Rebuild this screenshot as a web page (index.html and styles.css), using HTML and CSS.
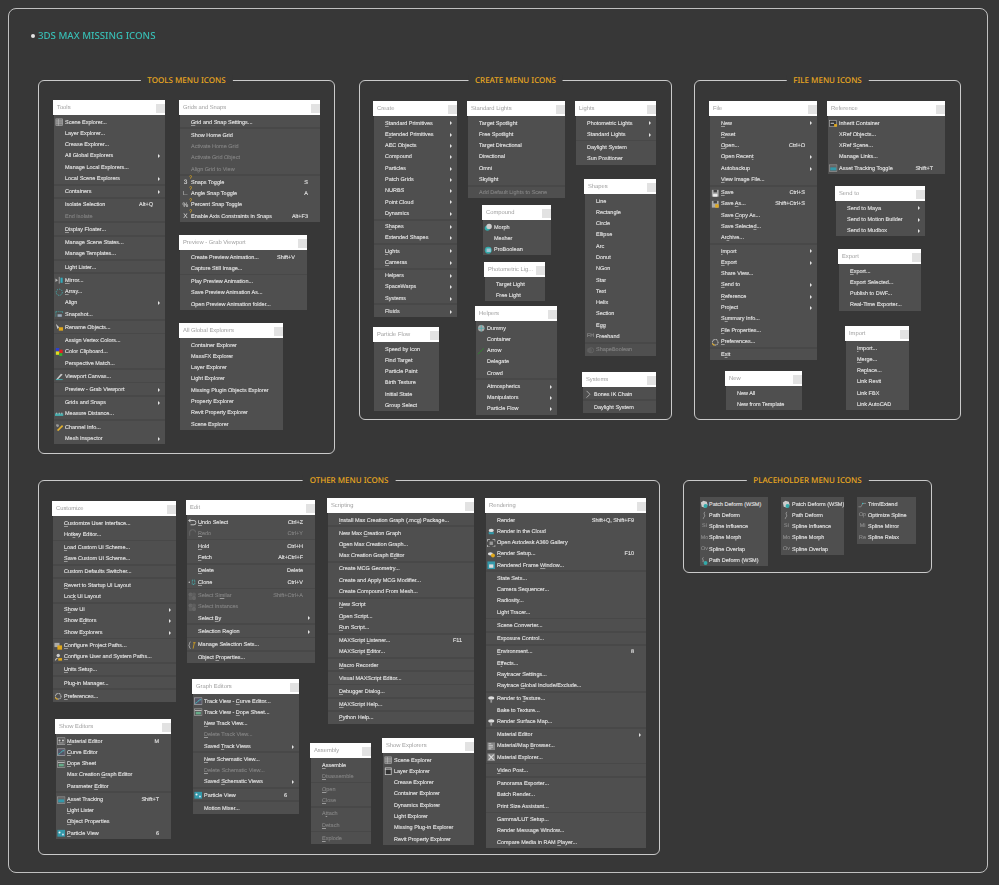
FILE: index.html
```html
<!DOCTYPE html>
<html lang="en">
<head>
<meta charset="utf-8">
<title>3DS Max Missing Icons</title>
<link rel="stylesheet" href="styles.css">
</head>
<body>
<svg class="sprite" aria-hidden="true">
  <symbol id="table" viewBox="0 0 10 10"><rect x="1" y="1" width="8" height="8" fill="#777" stroke="#aaa" stroke-width=".7"/><path d="M1 3.5h8M1 6h8M4 1v8" stroke="#ccc" stroke-width=".6"/></symbol>
  <symbol id="layer" viewBox="0 0 10 10"><rect x="1.5" y="1" width="7" height="8" fill="#333" stroke="#ccc" stroke-width=".9"/><path d="M1 2.6h8" stroke="#ccc"/></symbol>
  <symbol id="mirror" viewBox="0 0 10 10"><path d="M.5 3l3 2-3 2z" fill="#bbb"/><path d="M5 1v8" stroke="#ddd" stroke-width=".7"/><rect x="6.5" y="2" width="2.5" height="6" fill="#3ab"/></symbol>
  <symbol id="array" viewBox="0 0 10 10"><circle cx="5" cy="5" r="3.6" fill="none" stroke="#4bb" stroke-width="1" stroke-dasharray="1.5 1.2"/></symbol>
  <symbol id="snapshot" viewBox="0 0 10 10"><path d="M1 2h8M1 2v6M9 2v2" stroke="#4bb" stroke-dasharray="1.2 1" fill="none" stroke-width=".9"/><rect x="3" y="5" width="5" height="3" fill="#9ab"/></symbol>
  <symbol id="rename" viewBox="0 0 10 10"><path d="M1 1l4 4-2 2z" fill="#ccc"/><rect x="4.5" y="5" width="5" height="4" fill="#e0a81c"/></symbol>
  <symbol id="color" viewBox="0 0 10 10"><rect x="1" y="0" width="4" height="4" fill="#2b3fd0"/><rect x="5" y="2" width="4" height="4" fill="#d22"/><rect x="1" y="4" width="4" height="4" fill="#dd2"/><rect x="5" y="6" width="3.500" height="3.500" fill="#3a3"/></symbol>
  <symbol id="canvas" viewBox="0 0 10 10"><path d="M1 9l6-7 2 1-6 6z" fill="#ccc"/><path d="M1 9h8" stroke="#4bb"/></symbol>
  <symbol id="measure" viewBox="0 0 10 10"><rect x="0" y="4" width="10" height="3" fill="#4aa"/><path d="M2 3v2M5 3v2M8 3v2" stroke="#ddd" stroke-width=".8"/></symbol>
  <symbol id="channel" viewBox="0 0 10 10"><path d="M1 1l3 3-1 1z" fill="#aaa"/><path d="M3 9l6-6" stroke="#e0b030" stroke-width="2"/><circle cx="3" cy="3" r="1.600" fill="#999"/></symbol>
  <symbol id="save" viewBox="0 0 10 10"><rect x="1" y="1" width="8" height="8" fill="#aaa"/><rect x="3" y="1" width="4" height="3" fill="#444"/><rect x="2.500" y="6" width="5" height="3" fill="#eee"/></symbol>
  <symbol id="saveas" viewBox="0 0 10 10"><rect x="1" y="1" width="8" height="8" fill="#aaa"/><rect x="3" y="1" width="4" height="3" fill="#444"/><rect x="5" y="5" width="4" height="4" fill="#e0a81c"/></symbol>
  <symbol id="gear" viewBox="0 0 10 10"><circle cx="5" cy="5" r="3.300" fill="none" stroke="#bbb" stroke-width="1.300" stroke-dasharray="1.400 .6"/><path d="M1.500 6.500a3.800 3.800 0 0 0 3 2" stroke="#e0a81c" fill="none" stroke-width="1.200"/></symbol>
  <symbol id="inherit" viewBox="0 0 10 10"><rect x=".5" y="1.500" width="8" height="7" fill="#333" stroke="#bbb" stroke-width=".7"/><path d="M2 5h4" stroke="#eee"/><rect x="6" y="6" width="3.500" height="3" fill="#e0a81c"/></symbol>
  <symbol id="asset" viewBox="0 0 10 10"><rect x=".5" y="1" width="9" height="8" fill="#666" stroke="#aaa" stroke-width=".6"/><rect x="1.500" y="4" width="7" height="3.500" fill="#39a"/></symbol>
  <symbol id="morph" viewBox="0 0 10 10"><circle cx="4" cy="6" r="3.200" fill="#3aa"/><circle cx="6" cy="4" r="3.200" fill="#ccc"/></symbol>
  <symbol id="pro" viewBox="0 0 10 10"><circle cx="5" cy="5" r="4" fill="#3aa"/><path d="M3 3h5v4H3z" fill="#bcd" opacity=".8"/></symbol>
  <symbol id="dummy" viewBox="0 0 10 10"><circle cx="5" cy="5" r="3.800" fill="#aaa"/><path d="M1 5h8M5 1v8" stroke="#4aa" stroke-width=".8"/></symbol>
  <symbol id="green" viewBox="0 0 10 10"><path d="M1 8.500l7-7" stroke="#2c8a2c" stroke-width="1"/></symbol>
  <symbol id="bones" viewBox="0 0 10 10"><path d="M3 1l4 4-4 4" fill="none" stroke="#bbb" stroke-width="1"/></symbol>
  <symbol id="dimcircle" viewBox="0 0 10 10"><circle cx="4" cy="5" r="3" fill="#5c5c5c"/><circle cx="6" cy="5" r="3" fill="none" stroke="#666"/></symbol>
  <symbol id="undo" viewBox="0 0 10 10"><path d="M1 3h6a2 2 0 0 1 0 5H3M1 3l2-2M1 3l2 2" fill="none" stroke="#eee" stroke-width=".9"/></symbol>
  <symbol id="redo" viewBox="0 0 10 10"><path d="M9 4a3.500 3.500 0 0 0-7 1v3" fill="none" stroke="#666" stroke-width="1.200"/></symbol>
  <symbol id="clone" viewBox="0 0 10 10"><circle cx="1.500" cy="5" r=".8" fill="#ccc"/><path d="M5 2.500h3v5H5z" fill="none" stroke="#4cc" stroke-width=".9" stroke-dasharray="1.200 1"/></symbol>
  <symbol id="similar" viewBox="0 0 10 10"><circle cx="3" cy="3" r="2.500" fill="#666"/><circle cx="7" cy="3" r="2.500" fill="#5e5e5e"/><circle cx="3" cy="7" r="2.500" fill="#5e5e5e"/><circle cx="7" cy="7" r="2.500" fill="#666"/></symbol>
  <symbol id="sets" viewBox="0 0 10 10"><path d="M3 1C1.500 1 2 4.500 1 5c1 .5.5 4 2 4" fill="none" stroke="#ccc" stroke-width=".8"/><path d="M6 2h3M7.500 2L6 9" stroke="#e0a81c" stroke-width=".9"/></symbol>
  <symbol id="curve" viewBox="0 0 10 10"><rect x=".5" y="1" width="9" height="8" fill="#556" stroke="#ccc" stroke-width=".6"/><path d="M1.500 7.500C4 7 5 3 8.500 3" stroke="#4cc" fill="none"/></symbol>
  <symbol id="dope" viewBox="0 0 10 10"><rect x=".5" y="1" width="9" height="8" fill="#555" stroke="#bbb" stroke-width=".6"/><path d="M1 3h8" stroke="#ccc"/><rect x="2" y="4.500" width="6" height="3" fill="#6a8"/></symbol>
  <symbol id="particle" viewBox="0 0 10 10"><rect x=".5" y="1" width="9" height="8" fill="#39a"/><circle cx="3" cy="4" r="1.200" fill="#eee"/><circle cx="7" cy="6.500" r="1.200" fill="#cde"/></symbol>
  <symbol id="material" viewBox="0 0 10 10"><rect x=".5" y="1" width="9" height="8" fill="#555" stroke="#ccc" stroke-width=".6"/><circle cx="3" cy="4" r="1.200" fill="#ccc"/><circle cx="7" cy="4" r="1.200" fill="#ccc"/><path d="M2 7h6" stroke="#bbb"/></symbol>
  <symbol id="paths" viewBox="0 0 10 10"><rect x=".5" y="1" width="6" height="5" fill="#aaa"/><rect x="4" y="4" width="5.500" height="5" fill="#e0a81c"/></symbol>
  <symbol id="user" viewBox="0 0 10 10"><circle cx="5" cy="3" r="2" fill="#ccc"/><path d="M1 9.500c0-3 2-4 4-4" fill="#ccc"/><rect x="5" y="6" width="4.500" height="3" fill="#e0a81c"/></symbol>
  <symbol id="teapot" viewBox="0 0 10 10"><ellipse cx="5" cy="4" rx="3" ry="2" fill="#ddd"/><rect x="2" y="6" width="6" height="2.500" fill="#39a"/></symbol>
  <symbol id="a360" viewBox="0 0 10 10"><path d="M.5 3V.5h3M6.500.5h3v2.500M9.500 7v2.500h-3M3.500 9.500h-3V7" fill="none" stroke="#ccc" stroke-width=".9"/><rect x="3" y="3" width="4" height="4" fill="#999"/></symbol>
  <symbol id="setup" viewBox="0 0 10 10"><ellipse cx="4" cy="4.500" rx="3" ry="2" fill="#ddd"/><circle cx="7" cy="6.500" r="2.300" fill="#e0a81c"/></symbol>
  <symbol id="frame" viewBox="0 0 10 10"><rect x=".5" y=".5" width="9" height="9" fill="#39a"/><rect x="2.500" y="4" width="5" height="4" fill="#ddd"/></symbol>
  <symbol id="tex" viewBox="0 0 10 10"><ellipse cx="5" cy="3.500" rx="3.500" ry="2" fill="#ddd"/><rect x="4" y="5" width="2" height="4" fill="#999"/></symbol>
  <symbol id="browser" viewBox="0 0 10 10"><rect x=".5" y=".5" width="9" height="9" fill="#888"/><path d="M2 2h3M2 4h5M2 6h5M2 8h3" stroke="#ddd" stroke-width=".8"/></symbol>
  <symbol id="explorer" viewBox="0 0 10 10"><rect x=".5" y=".5" width="9" height="9" fill="#888"/><path d="M2 2l6 6M8 2L2 8" stroke="#ddd" stroke-width="1.300"/></symbol>
  <symbol id="patch" viewBox="0 0 10 10"><path d="M1 3l3-2 4 1 1 4-3 3-4-1z" fill="#ccc"/><circle cx="6.500" cy="7" r="2.300" fill="#3aa"/></symbol>
  <symbol id="path" viewBox="0 0 10 10"><path d="M6 1C3 3 7 5 5 7S4 9 4.500 9" fill="none" stroke="#bbb" stroke-width=".8"/></symbol>
  <symbol id="pathw" viewBox="0 0 10 10"><path d="M4 .5C1.500 2 5 4 3.500 6" fill="none" stroke="#bbb" stroke-width=".8"/><circle cx="6.500" cy="7" r="2.300" fill="#3aa"/></symbol>
  <symbol id="trim" viewBox="0 0 10 10"><path d="M.5 8h3l2-4h4" fill="none" stroke="#999" stroke-width=".8"/><circle cx="5.500" cy="4" r=".9" fill="#4bb"/></symbol>
</svg>
<main class="frame">
  <h1 class="page-title">3DS MAX MISSING ICONS</h1>

  <div class="panel-row first">
    <section class="panel p-tools">
      <h2 class="panel-title">TOOLS MENU ICONS</h2>

      <div class="menu m-tools">
        <div class="head"><span>Tools</span><i class="close"></i></div>
        <div class="body">
          <div class="row"><i class="gut"><svg class="ic"><use href="#table"/></svg></i><span class="lab">Scene Explorer...</span></div>
          <div class="row"><span class="lab">Layer Explorer...</span></div>
          <div class="row"><span class="lab">Crease Explorer...</span></div>
          <div class="row"><span class="lab">All Global Explorers</span><i class="arr"></i></div>
          <div class="row"><span class="lab">Manage Local Explorers...</span></div>
          <div class="row"><span class="lab">Local Scene Explorers</span><i class="arr"></i></div>
          <div class="sep"></div>
          <div class="row"><span class="lab">Containers</span><i class="arr"></i></div>
          <div class="sep"></div>
          <div class="row"><span class="lab">Isolate Selection</span><span class="key">Alt+Q</span></div>
          <div class="row dis"><span class="lab">End Isolate</span></div>
          <div class="sep"></div>
          <div class="row"><span class="lab"><u>D</u>isplay Floater...</span></div>
          <div class="sep"></div>
          <div class="row"><span class="lab">Manage Scene States...</span></div>
          <div class="row"><span class="lab">Manage Templates...</span></div>
          <div class="sep"></div>
          <div class="row"><span class="lab">Light Lister...</span></div>
          <div class="sep"></div>
          <div class="row"><i class="gut"><svg class="ic"><use href="#mirror"/></svg></i><span class="lab"><u>M</u>irror...</span></div>
          <div class="row"><i class="gut"><svg class="ic"><use href="#array"/></svg></i><span class="lab"><u>A</u>rray...</span></div>
          <div class="row"><span class="lab">Align</span><i class="arr"></i></div>
          <div class="row"><i class="gut"><svg class="ic"><use href="#snapshot"/></svg></i><span class="lab">Snapshot...</span></div>
          <div class="sep"></div>
          <div class="row"><i class="gut"><svg class="ic"><use href="#rename"/></svg></i><span class="lab">Rename Objects...</span></div>
          <div class="sep"></div>
          <div class="row"><span class="lab">Assign Vertex Colors...</span></div>
          <div class="row"><i class="gut"><svg class="ic"><use href="#color"/></svg></i><span class="lab">Color Clipboard...</span></div>
          <div class="row"><span class="lab">Perspective Match...</span></div>
          <div class="sep"></div>
          <div class="row"><i class="gut"><svg class="ic"><use href="#canvas"/></svg></i><span class="lab">Viewport Canvas...</span></div>
          <div class="sep"></div>
          <div class="row"><span class="lab">Preview - Grab Viewport</span><i class="arr"></i></div>
          <div class="sep"></div>
          <div class="row"><span class="lab">Grids and Snaps</span><i class="arr"></i></div>
          <div class="row"><i class="gut"><svg class="ic"><use href="#measure"/></svg></i><span class="lab">Measure Distance...</span></div>
          <div class="sep"></div>
          <div class="row"><i class="gut"><svg class="ic"><use href="#channel"/></svg></i><span class="lab">Channel Info...</span></div>
          <div class="row"><span class="lab">Mesh Inspector</span><i class="arr"></i></div>
        </div>
      </div>

      <div class="menu m-grids">
        <div class="head"><span>Grids and Snaps</span><i class="close"></i></div>
        <div class="body">
          <div class="row"><span class="lab"><u>G</u>rid and Snap Settings...</span></div>
          <div class="sep"></div>
          <div class="row"><span class="lab">Show Home Grid</span></div>
          <div class="row dis"><span class="lab">Activate Home Grid</span></div>
          <div class="row dis"><span class="lab">Activate Grid Object</span></div>
          <div class="row dis"><span class="lab">Align Grid to View</span></div>
          <div class="sep"></div>
          <div class="row"><i class="gut glyph snap">3</i><span class="lab">Snaps Toggle</span><span class="key">S</span></div>
          <div class="row"><i class="gut glyph snap">∟</i><span class="lab">Angle Snap Toggle</span><span class="key">A</span></div>
          <div class="row"><i class="gut glyph snap">%</i><span class="lab">Percent Snap Toggle</span></div>
          <div class="row"><i class="gut glyph snap">X</i><span class="lab">Enable Axis Constraints in Snaps</span><span class="key">Alt+F3</span></div>
        </div>
      </div>

      <div class="menu m-preview">
        <div class="head"><span>Preview - Grab Viewport</span><i class="close"></i></div>
        <div class="body">
          <div class="row"><span class="lab">Create Preview Animation...</span><span class="key">Shift+V</span></div>
          <div class="row"><span class="lab">Capture Still Image...</span></div>
          <div class="sep"></div>
          <div class="row"><span class="lab">Play Preview Animation...</span></div>
          <div class="row"><span class="lab">Save Preview Animation As...</span></div>
          <div class="row"><span class="lab">Open Preview Animation folder...</span></div>
        </div>
      </div>

      <div class="menu m-global">
        <div class="head"><span>All Global Explorers</span><i class="close"></i></div>
        <div class="body">
          <div class="row"><span class="lab">Container Explorer</span></div>
          <div class="row"><span class="lab">MassFX Explorer</span></div>
          <div class="row"><span class="lab">Layer Explorer</span></div>
          <div class="row"><span class="lab">Light Explorer</span></div>
          <div class="row"><span class="lab">Missing Plugin Objects Explorer</span></div>
          <div class="row"><span class="lab">Property Explorer</span></div>
          <div class="row"><span class="lab">Revit Property Explorer</span></div>
          <div class="row"><span class="lab">Scene Explorer</span></div>
        </div>
      </div>
    </section>

    <section class="panel p-create">
      <h2 class="panel-title">CREATE MENU ICONS</h2>

      <div class="menu m-create">
        <div class="head"><span>Create</span><i class="close"></i></div>
        <div class="body">
          <div class="row"><span class="lab"><u>S</u>tandard Primitives</span><i class="arr"></i></div>
          <div class="row"><span class="lab">E<u>x</u>tended Primitives</span><i class="arr"></i></div>
          <div class="row"><span class="lab">AEC Objects</span><i class="arr"></i></div>
          <div class="row"><span class="lab">Compound</span><i class="arr"></i></div>
          <div class="row"><span class="lab">Particles</span><i class="arr"></i></div>
          <div class="row"><span class="lab">Patch Grids</span><i class="arr"></i></div>
          <div class="row"><span class="lab">NURBS</span><i class="arr"></i></div>
          <div class="row"><span class="lab">Point Cloud</span><i class="arr"></i></div>
          <div class="row"><span class="lab">Dynamics</span><i class="arr"></i></div>
          <div class="sep"></div>
          <div class="row"><span class="lab">S<u>h</u>apes</span><i class="arr"></i></div>
          <div class="row"><span class="lab">Extended Shapes</span><i class="arr"></i></div>
          <div class="sep"></div>
          <div class="row"><span class="lab"><u>L</u>ights</span><i class="arr"></i></div>
          <div class="row"><span class="lab"><u>C</u>ameras</span><i class="arr"></i></div>
          <div class="sep"></div>
          <div class="row"><span class="lab">Helpers</span><i class="arr"></i></div>
          <div class="row"><span class="lab">SpaceWarps</span><i class="arr"></i></div>
          <div class="row"><span class="lab">Systems</span><i class="arr"></i></div>
          <div class="sep"></div>
          <div class="row"><span class="lab">Fluids</span><i class="arr"></i></div>
        </div>
      </div>

      <div class="menu m-stdlights">
        <div class="head"><span>Standard Lights</span><i class="close"></i></div>
        <div class="body">
          <div class="row"><span class="lab">Target Spotlight</span></div>
          <div class="row"><span class="lab">Free Spotlight</span></div>
          <div class="row"><span class="lab">Target Directional</span></div>
          <div class="row"><span class="lab">Directional</span></div>
          <div class="row"><span class="lab">Omni</span></div>
          <div class="row"><span class="lab">Skylight</span></div>
          <div class="sep"></div>
          <div class="row dis"><span class="lab">Add Default Lights to Scene</span></div>
        </div>
      </div>

      <div class="menu m-lights">
        <div class="head"><span>Lights</span><i class="close"></i></div>
        <div class="body">
          <div class="row"><span class="lab">Photometric Lights</span><i class="arr"></i></div>
          <div class="row"><span class="lab">Standard Lights</span><i class="arr"></i></div>
          <div class="sep"></div>
          <div class="row"><span class="lab">Daylight System</span></div>
          <div class="row"><span class="lab">Sun Positioner</span></div>
        </div>
      </div>

      <div class="menu m-shapes">
        <div class="head"><span>Shapes</span><i class="close"></i></div>
        <div class="body">
          <div class="row"><span class="lab">Line</span></div>
          <div class="row"><span class="lab">Rectangle</span></div>
          <div class="row"><span class="lab">Circle</span></div>
          <div class="row"><span class="lab">Ellipse</span></div>
          <div class="row"><span class="lab">Arc</span></div>
          <div class="row"><span class="lab">Donut</span></div>
          <div class="row"><span class="lab">NGon</span></div>
          <div class="row"><span class="lab">Star</span></div>
          <div class="row"><span class="lab">Text</span></div>
          <div class="row"><span class="lab">Helix</span></div>
          <div class="row"><span class="lab">Section</span></div>
          <div class="row"><span class="lab">Egg</span></div>
          <div class="row"><i class="gut glyph">FH</i><span class="lab">Freehand</span></div>
          <div class="sep"></div>
          <div class="row dis"><i class="gut"><svg class="ic"><use href="#dimcircle"/></svg></i><span class="lab">ShapeBoolean</span></div>
        </div>
      </div>

      <div class="menu m-compound">
        <div class="head"><span>Compound</span><i class="close"></i></div>
        <div class="body">
          <div class="row"><i class="gut"><svg class="ic"><use href="#morph"/></svg></i><span class="lab">Morph</span></div>
          <div class="row"><span class="lab">Mesher</span></div>
          <div class="row"><i class="gut"><svg class="ic"><use href="#pro"/></svg></i><span class="lab">ProBoolean</span></div>
        </div>
      </div>

      <div class="menu m-photo">
        <div class="head"><span>Photometric Lig...</span><i class="close"></i></div>
        <div class="body">
          <div class="row"><span class="lab">Target Light</span></div>
          <div class="row"><span class="lab">Free Light</span></div>
        </div>
      </div>

      <div class="menu m-helpers">
        <div class="head"><span>Helpers</span><i class="close"></i></div>
        <div class="body">
          <div class="row"><i class="gut"><svg class="ic"><use href="#dummy"/></svg></i><span class="lab">Dummy</span></div>
          <div class="row"><span class="lab">Container</span></div>
          <div class="row"><i class="gut"><svg class="ic"><use href="#green"/></svg></i><span class="lab">Arrow</span></div>
          <div class="row"><span class="lab">Delegate</span></div>
          <div class="row"><span class="lab">Crowd</span></div>
          <div class="sep"></div>
          <div class="row"><span class="lab">Atmospherics</span><i class="arr"></i></div>
          <div class="row"><span class="lab">Manipulators</span><i class="arr"></i></div>
          <div class="row"><span class="lab">Particle Flow</span><i class="arr"></i></div>
        </div>
      </div>

      <div class="menu m-particle">
        <div class="head"><span>Particle Flow</span><i class="close"></i></div>
        <div class="body">
          <div class="row"><span class="lab">Speed by Icon</span></div>
          <div class="row"><span class="lab">Find Target</span></div>
          <div class="row"><span class="lab">Particle Paint</span></div>
          <div class="row"><span class="lab">Birth Texture</span></div>
          <div class="row"><span class="lab">Initial State</span></div>
          <div class="row"><span class="lab">Group Select</span></div>
        </div>
      </div>

      <div class="menu m-systems">
        <div class="head"><span>Systems</span><i class="close"></i></div>
        <div class="body">
          <div class="row"><i class="gut"><svg class="ic"><use href="#bones"/></svg></i><span class="lab">Bones IK Chain</span></div>
          <div class="sep"></div>
          <div class="row"><span class="lab">Daylight System</span></div>
        </div>
      </div>
    </section>

    <section class="panel p-file">
      <h2 class="panel-title">FILE MENU ICONS</h2>

      <div class="menu m-file">
        <div class="head"><span>File</span><i class="close"></i></div>
        <div class="body">
          <div class="row"><span class="lab"><u>N</u>ew</span><i class="arr"></i></div>
          <div class="row"><span class="lab"><u>R</u>eset</span></div>
          <div class="row"><span class="lab"><u>O</u>pen...</span><span class="key">Ctrl+O</span></div>
          <div class="row"><span class="lab">Open Recen<u>t</u></span><i class="arr"></i></div>
          <div class="row"><span class="lab">Autobackup</span><i class="arr"></i></div>
          <div class="row"><span class="lab"><u>V</u>iew Image File...</span></div>
          <div class="sep"></div>
          <div class="row"><i class="gut"><svg class="ic"><use href="#save"/></svg></i><span class="lab"><u>S</u>ave</span><span class="key">Ctrl+S</span></div>
          <div class="row"><i class="gut"><svg class="ic"><use href="#saveas"/></svg></i><span class="lab">Save <u>A</u>s...</span><span class="key">Shift+Ctrl+S</span></div>
          <div class="row"><span class="lab">Save <u>C</u>opy As...</span></div>
          <div class="row"><span class="lab">Save Selecte<u>d</u>...</span></div>
          <div class="row"><span class="lab">Ar<u>c</u>hive...</span></div>
          <div class="sep"></div>
          <div class="row"><span class="lab"><u>I</u>mport</span><i class="arr"></i></div>
          <div class="row"><span class="lab"><u>E</u>xport</span><i class="arr"></i></div>
          <div class="row"><span class="lab">Share View...</span></div>
          <div class="row"><span class="lab"><u>S</u>end to</span><i class="arr"></i></div>
          <div class="row"><span class="lab"><u>R</u>eference</span><i class="arr"></i></div>
          <div class="row"><span class="lab">Project</span><i class="arr"></i></div>
          <div class="row"><span class="lab">S<u>u</u>mmary Info...</span></div>
          <div class="row"><span class="lab"><u>F</u>ile Properties...</span></div>
          <div class="row"><i class="gut"><svg class="ic"><use href="#gear"/></svg></i><span class="lab"><u>P</u>references...</span></div>
          <div class="sep"></div>
          <div class="row"><span class="lab">E<u>x</u>it</span></div>
        </div>
      </div>

      <div class="menu m-ref">
        <div class="head"><span>Reference</span><i class="close"></i></div>
        <div class="body">
          <div class="row"><i class="gut"><svg class="ic"><use href="#inherit"/></svg></i><span class="lab">Inherit Container</span></div>
          <div class="row"><span class="lab">XRef Ob<u>j</u>ects...</span></div>
          <div class="row"><span class="lab">XRef S<u>c</u>ene...</span></div>
          <div class="row"><span class="lab">Manage Links...</span></div>
          <div class="row"><i class="gut"><svg class="ic"><use href="#asset"/></svg></i><span class="lab">Asset Tracking Toggle</span><span class="key">Shift+T</span></div>
        </div>
      </div>

      <div class="menu m-send">
        <div class="head"><span>Send to</span><i class="close"></i></div>
        <div class="body">
          <div class="row"><span class="lab">Send to Maya</span><i class="arr"></i></div>
          <div class="row"><span class="lab">Send to Motion Builder</span><i class="arr"></i></div>
          <div class="row"><span class="lab">Send to Mudbox</span><i class="arr"></i></div>
        </div>
      </div>

      <div class="menu m-export">
        <div class="head"><span>Export</span><i class="close"></i></div>
        <div class="body">
          <div class="row"><span class="lab"><u>E</u>xport...</span></div>
          <div class="row"><span class="lab">Export Selected...</span></div>
          <div class="row"><span class="lab">Publish to DWF...</span></div>
          <div class="row"><span class="lab">Real-Time Exporter...</span></div>
        </div>
      </div>

      <div class="menu m-import">
        <div class="head"><span>Import</span><i class="close"></i></div>
        <div class="body">
          <div class="row"><span class="lab"><u>I</u>mport...</span></div>
          <div class="row"><span class="lab"><u>M</u>erge...</span></div>
          <div class="row"><span class="lab">Re<u>p</u>lace...</span></div>
          <div class="row"><span class="lab">Link Revit</span></div>
          <div class="row"><span class="lab">Link FBX</span></div>
          <div class="row"><span class="lab">Link AutoCAD</span></div>
        </div>
      </div>

      <div class="menu m-new">
        <div class="head"><span>New</span><i class="close"></i></div>
        <div class="body">
          <div class="row"><span class="lab">New All</span></div>
          <div class="row"><span class="lab">New from Template</span></div>
        </div>
      </div>
    </section>
  </div>

  <div class="panel-row">
    <section class="panel p-other">
      <h2 class="panel-title">OTHER MENU ICONS</h2>

      <div class="menu m-customize">
        <div class="head"><span>Customize</span><i class="close"></i></div>
        <div class="body">
          <div class="row"><span class="lab"><u>C</u>ustomize User Interface...</span></div>
          <div class="row"><span class="lab">Hot<u>k</u>ey Editor...</span></div>
          <div class="sep"></div>
          <div class="row"><span class="lab"><u>L</u>oad Custom UI Scheme...</span></div>
          <div class="row"><span class="lab"><u>S</u>ave Custom UI Scheme...</span></div>
          <div class="sep"></div>
          <div class="row"><span class="lab">Custom Defaults Switcher...</span></div>
          <div class="sep"></div>
          <div class="row"><span class="lab"><u>R</u>evert to Startup UI Layout</span></div>
          <div class="row"><span class="lab">Loc<u>k</u> UI Layout</span></div>
          <div class="sep"></div>
          <div class="row"><span class="lab">S<u>h</u>ow UI</span><i class="arr"></i></div>
          <div class="row"><span class="lab">Show E<u>d</u>itors</span><i class="arr"></i></div>
          <div class="row"><span class="lab">Show E<u>x</u>plorers</span><i class="arr"></i></div>
          <div class="sep"></div>
          <div class="row"><i class="gut"><svg class="ic"><use href="#paths"/></svg></i><span class="lab"><u>C</u>onfigure Project Paths...</span></div>
          <div class="row"><i class="gut"><svg class="ic"><use href="#user"/></svg></i><span class="lab"><u>C</u>onfigure User and System Paths...</span></div>
          <div class="sep"></div>
          <div class="row"><span class="lab"><u>U</u>nits Setup...</span></div>
          <div class="sep"></div>
          <div class="row"><span class="lab">Plug-in Manager...</span></div>
          <div class="sep"></div>
          <div class="row"><i class="gut"><svg class="ic"><use href="#gear"/></svg></i><span class="lab"><u>P</u>references...</span></div>
        </div>
      </div>

      <div class="menu m-edit">
        <div class="head"><span>Edit</span><i class="close"></i></div>
        <div class="body">
          <div class="row"><i class="gut"><svg class="ic"><use href="#undo"/></svg></i><span class="lab"><u>U</u>ndo Select</span><span class="key">Ctrl+Z</span></div>
          <div class="row dis"><i class="gut"><svg class="ic"><use href="#redo"/></svg></i><span class="lab"><u>R</u>edo</span><span class="key">Ctrl+Y</span></div>
          <div class="sep"></div>
          <div class="row"><span class="lab"><u>H</u>old</span><span class="key">Ctrl+H</span></div>
          <div class="row"><span class="lab"><u>F</u>etch</span><span class="key">Alt+Ctrl+F</span></div>
          <div class="sep"></div>
          <div class="row"><span class="lab"><u>D</u>elete</span><span class="key">Delete</span></div>
          <div class="row"><i class="gut"><svg class="ic"><use href="#clone"/></svg></i><span class="lab"><u>C</u>lone</span><span class="key">Ctrl+V</span></div>
          <div class="sep"></div>
          <div class="row dis"><i class="gut"><svg class="ic"><use href="#similar"/></svg></i><span class="lab">Select Si<u>m</u>ilar</span><span class="key">Shift+Ctrl+A</span></div>
          <div class="row dis"><i class="gut"><svg class="ic"><use href="#similar"/></svg></i><span class="lab">Select Instances</span></div>
          <div class="row"><span class="lab">Select <u>B</u>y</span><i class="arr"></i></div>
          <div class="sep"></div>
          <div class="row"><span class="lab">Selection Region</span><i class="arr"></i></div>
          <div class="sep"></div>
          <div class="row"><i class="gut"><svg class="ic"><use href="#sets"/></svg></i><span class="lab">Manage Selection Sets...</span></div>
          <div class="sep"></div>
          <div class="row"><span class="lab">Object <u>P</u>roperties...</span></div>
        </div>
      </div>

      <div class="menu m-graph">
        <div class="head"><span>Graph Editors</span><i class="close"></i></div>
        <div class="body">
          <div class="row"><i class="gut"><svg class="ic"><use href="#curve"/></svg></i><span class="lab">Track View - <u>C</u>urve Editor...</span></div>
          <div class="row"><i class="gut"><svg class="ic"><use href="#dope"/></svg></i><span class="lab">Track View - <u>D</u>ope Sheet...</span></div>
          <div class="row"><span class="lab"><u>N</u>ew Track View...</span></div>
          <div class="row dis"><span class="lab"><u>D</u>elete Track View...</span></div>
          <div class="row"><span class="lab">Saved <u>T</u>rack Views</span><i class="arr"></i></div>
          <div class="sep"></div>
          <div class="row"><span class="lab"><u>N</u>ew Schematic View...</span></div>
          <div class="row dis"><span class="lab"><u>D</u>elete Schematic View...</span></div>
          <div class="row"><span class="lab">Saved <u>S</u>chematic Views</span><i class="arr"></i></div>
          <div class="sep"></div>
          <div class="row"><i class="gut"><svg class="ic"><use href="#particle"/></svg></i><span class="lab">Particle View</span><span class="key">6</span></div>
          <div class="sep"></div>
          <div class="row"><span class="lab">Motion Mixer...</span></div>
        </div>
      </div>

      <div class="menu m-showed">
        <div class="head"><span>Show Editors</span><i class="close"></i></div>
        <div class="body">
          <div class="row"><i class="gut"><svg class="ic"><use href="#material"/></svg></i><span class="lab"><u>M</u>aterial Editor</span><span class="key">M</span></div>
          <div class="row"><i class="gut"><svg class="ic"><use href="#curve"/></svg></i><span class="lab"><u>C</u>urve Editor</span></div>
          <div class="row"><i class="gut"><svg class="ic"><use href="#dope"/></svg></i><span class="lab"><u>D</u>ope Sheet</span></div>
          <div class="row"><span class="lab">Max Creation <u>G</u>raph Editor</span></div>
          <div class="row"><span class="lab">Parameter <u>E</u>ditor</span></div>
          <div class="sep"></div>
          <div class="row"><i class="gut"><svg class="ic"><use href="#asset"/></svg></i><span class="lab"><u>A</u>sset Tracking</span><span class="key">Shift+T</span></div>
          <div class="row"><span class="lab"><u>L</u>ight Lister</span></div>
          <div class="row"><span class="lab"><u>O</u>bject Properties</span></div>
          <div class="row"><i class="gut"><svg class="ic"><use href="#particle"/></svg></i><span class="lab"><u>P</u>article View</span><span class="key">6</span></div>
        </div>
      </div>

      <div class="menu m-script">
        <div class="head"><span>Scripting</span><i class="close"></i></div>
        <div class="body">
          <div class="row"><span class="lab"><u>I</u>nstall Max Creation Graph (.mcg) Package...</span></div>
          <div class="sep"></div>
          <div class="row"><span class="lab">New Max <u>C</u>reation Graph</span></div>
          <div class="row"><span class="lab">O<u>p</u>en Max Creation Graph...</span></div>
          <div class="row"><span class="lab">Max Creation Graph E<u>d</u>itor</span></div>
          <div class="sep"></div>
          <div class="row"><span class="lab">Create MCG Geometry...</span></div>
          <div class="row"><span class="lab">Create and Apply MCG Modifier...</span></div>
          <div class="row"><span class="lab">Create Compound From Mesh...</span></div>
          <div class="sep"></div>
          <div class="row"><span class="lab"><u>N</u>ew Script</span></div>
          <div class="row"><span class="lab"><u>O</u>pen Script...</span></div>
          <div class="row"><span class="lab"><u>R</u>un Script...</span></div>
          <div class="sep"></div>
          <div class="row"><span class="lab">MAXScript <u>L</u>istener...</span><span class="key">F11</span></div>
          <div class="row"><span class="lab">MAXScript <u>E</u>ditor...</span></div>
          <div class="sep"></div>
          <div class="row"><span class="lab"><u>M</u>acro Recorder</span></div>
          <div class="sep"></div>
          <div class="row"><span class="lab">Visual MAXScript Editor...</span></div>
          <div class="sep"></div>
          <div class="row"><span class="lab"><u>D</u>ebugger Dialog...</span></div>
          <div class="sep"></div>
          <div class="row"><span class="lab"><u>M</u>AXScript Help...</span></div>
          <div class="sep"></div>
          <div class="row"><span class="lab"><u>P</u>ython Help...</span></div>
        </div>
      </div>

      <div class="menu m-assembly">
        <div class="head"><span>Assembly</span><i class="close"></i></div>
        <div class="body">
          <div class="row"><span class="lab"><u>A</u>ssemble</span></div>
          <div class="row dis"><span class="lab"><u>D</u>isassemble</span></div>
          <div class="sep"></div>
          <div class="row dis"><span class="lab"><u>O</u>pen</span></div>
          <div class="row dis"><span class="lab"><u>C</u>lose</span></div>
          <div class="sep"></div>
          <div class="row dis"><span class="lab">A<u>t</u>tach</span></div>
          <div class="row dis"><span class="lab"><u>D</u>etach</span></div>
          <div class="sep"></div>
          <div class="row dis"><span class="lab"><u>E</u>xplode</span></div>
        </div>
      </div>

      <div class="menu m-showex">
        <div class="head"><span>Show Explorers</span><i class="close"></i></div>
        <div class="body">
          <div class="row"><i class="gut"><svg class="ic"><use href="#table"/></svg></i><span class="lab">Scene Explorer</span></div>
          <div class="row"><i class="gut"><svg class="ic"><use href="#layer"/></svg></i><span class="lab">Layer Explorer</span></div>
          <div class="row"><span class="lab">Crease Explorer</span></div>
          <div class="row"><span class="lab">Container Explorer</span></div>
          <div class="row"><span class="lab">Dynamics Explorer</span></div>
          <div class="row"><span class="lab">Light Explorer</span></div>
          <div class="row"><span class="lab">Missing Plug-in Explorer</span></div>
          <div class="row"><span class="lab">Revit Property Explorer</span></div>
        </div>
      </div>

      <div class="menu m-render">
        <div class="head"><span>Rendering</span><i class="close"></i></div>
        <div class="body">
          <div class="row"><span class="lab">Render</span><span class="key">Shift+Q, Shift+F9</span></div>
          <div class="row"><i class="gut"><svg class="ic"><use href="#teapot"/></svg></i><span class="lab">Render in the Cloud</span></div>
          <div class="row"><i class="gut"><svg class="ic"><use href="#a360"/></svg></i><span class="lab">Open Autodesk A360 Gallery</span></div>
          <div class="row"><i class="gut"><svg class="ic"><use href="#setup"/></svg></i><span class="lab"><u>R</u>ender Setup...</span><span class="key">F10</span></div>
          <div class="row"><i class="gut"><svg class="ic"><use href="#frame"/></svg></i><span class="lab">Rendered Frame <u>W</u>indow...</span></div>
          <div class="sep"></div>
          <div class="row"><span class="lab">State Sets...</span></div>
          <div class="row"><span class="lab">Camera Sequencer...</span></div>
          <div class="row"><span class="lab">Radiosity...</span></div>
          <div class="row"><span class="lab">Light Tracer...</span></div>
          <div class="sep"></div>
          <div class="row"><span class="lab">Scene Converter...</span></div>
          <div class="sep"></div>
          <div class="row"><span class="lab">Exposure Control...</span></div>
          <div class="sep"></div>
          <div class="row"><span class="lab"><u>E</u>nvironment...</span><span class="key">8</span></div>
          <div class="row"><span class="lab">E<u>f</u>fects...</span></div>
          <div class="row"><span class="lab">Ra<u>y</u>tracer Settings...</span></div>
          <div class="row"><span class="lab">Raytrace <u>G</u>lobal Include/Exclude...</span></div>
          <div class="sep"></div>
          <div class="row"><i class="gut"><svg class="ic"><use href="#tex"/></svg></i><span class="lab">Render to <u>T</u>exture...</span></div>
          <div class="row"><span class="lab">Bake to Texture...</span></div>
          <div class="row"><i class="gut"><svg class="ic"><use href="#tex"/></svg></i><span class="lab">Render Surface Map...</span></div>
          <div class="sep"></div>
          <div class="row"><span class="lab">Material Editor</span><i class="arr"></i></div>
          <div class="row"><i class="gut"><svg class="ic"><use href="#browser"/></svg></i><span class="lab">Material/Map <u>B</u>rowser...</span></div>
          <div class="row"><i class="gut"><svg class="ic"><use href="#explorer"/></svg></i><span class="lab">Material Explorer...</span></div>
          <div class="sep"></div>
          <div class="row"><span class="lab"><u>V</u>ideo Post...</span></div>
          <div class="sep"></div>
          <div class="row"><span class="lab">Panorama Exporter...</span></div>
          <div class="row"><span class="lab">Batch Render...</span></div>
          <div class="row"><span class="lab">Print Size Assistant...</span></div>
          <div class="sep"></div>
          <div class="row"><span class="lab">Gamma/LUT Setup...</span></div>
          <div class="row"><span class="lab">Render Message Window...</span></div>
          <div class="row"><span class="lab">Compare Media in RAM <u>P</u>layer...</span></div>
        </div>
      </div>
    </section>

    <section class="panel p-holder">
      <h2 class="panel-title">PLACEHOLDER MENU ICONS</h2>

      <div class="menu m-ph1">
        <div class="body narrow">
          <div class="row"><i class="gut"><svg class="ic"><use href="#patch"/></svg></i><span class="lab">Patch Deform (WSM)</span></div>
          <div class="row"><i class="gut"><svg class="ic"><use href="#path"/></svg></i><span class="lab">Path Deform</span></div>
          <div class="row"><i class="gut glyph">Si</i><span class="lab">Spline Influence</span></div>
          <div class="row"><i class="gut glyph">Mo</i><span class="lab">Spline Morph</span></div>
          <div class="row"><i class="gut glyph">Ov</i><span class="lab">Spline Overlap</span></div>
          <div class="row"><i class="gut"><svg class="ic"><use href="#pathw"/></svg></i><span class="lab">Path Deform (WSM)</span></div>
        </div>
      </div>

      <div class="menu m-ph2">
        <div class="body">
          <div class="row"><i class="gut"><svg class="ic"><use href="#patch"/></svg></i><span class="lab">Patch Deform (WSM)</span></div>
          <div class="row"><i class="gut"><svg class="ic"><use href="#path"/></svg></i><span class="lab">Path Deform</span></div>
          <div class="row"><i class="gut glyph">Si</i><span class="lab">Spline Influence</span></div>
          <div class="row"><i class="gut glyph">Mo</i><span class="lab">Spline Morph</span></div>
          <div class="row"><i class="gut glyph">Ov</i><span class="lab">Spline Overlap</span></div>
        </div>
      </div>

      <div class="menu m-ph3">
        <div class="body">
          <div class="row"><i class="gut"><svg class="ic"><use href="#trim"/></svg></i><span class="lab">Trim/Extend</span></div>
          <div class="row"><i class="gut glyph">Op</i><span class="lab">Optimize Spline</span></div>
          <div class="row"><i class="gut glyph">Mi</i><span class="lab">Spline Mirror</span></div>
          <div class="row"><i class="gut glyph">Re</i><span class="lab">Spline Relax</span></div>
        </div>
      </div>
    </section>
  </div>
</main>
</body>
</html>
```

FILE: styles.css
```css
* { box-sizing: border-box; }

html, body { margin: 0; padding: 0; }

body {
  background: #373737;
  padding: 8px;
  width: 999px;
  height: 885px;
  overflow: hidden;
  font-family: "Liberation Sans", Arial, sans-serif;
  text-rendering: geometricPrecision;
}

.sprite { position: absolute; width: 0; height: 0; }

.frame {
  width: 980px;
  height: 865px;
  border: 1px solid #c0c0c0;
  border-radius: 8px;
  padding: 20px 0 0 29px;
  filter: blur(.3px);
}

.page-title {
  margin: 0 0 37px -7px;
  height: 14px;
  line-height: 14px;
  font-family: "Noto Sans", sans-serif;
  font-size: 9.7px;
  font-weight: 500;
  color: #38bdb4;
  display: flex;
  align-items: center;
  gap: 3px;
}
.page-title::before {
  content: "";
  width: 4px;
  height: 4px;
  border-radius: 50%;
  background: #e4e4e4;
}

.panel-row { display: flex; gap: 23px; margin-bottom: 26px; }
.panel-row.first { height: 374px; }

.panel {
  position: relative;
  border: 1px solid #cacaca;
  border-radius: 6px;
}
.p-tools  { width: 297px; height: 374px; margin-right: 1px; }
.p-create { width: 313px; height: 340px; margin-right: -1px; }
.p-file   { width: 267px; height: 340px; }
.p-other  { width: 622px; height: 375px; }
.p-holder { width: 249px; height: 93px; }

.panel-title {
  position: absolute;
  top: -6.500px;
  left: 50%;
  transform: translateX(-50%);
  margin: 0;
  padding: 0 7px;
  background: #373737;
  height: 12px;
  line-height: 12px;
  font-family: "Noto Sans", sans-serif;
  font-size: 8px;
  font-weight: 500;
  white-space: nowrap;
  color: #eaa81f;
}

.menu { position: absolute; }

.m-tools    { left: 14px;  top: 19px;  width: 112px; }
.m-grids    { left: 140px; top: 19px;  width: 141px; }
.m-preview  { left: 140px; top: 154px; width: 128px; }
.m-global   { left: 140px; top: 242px; width: 104px; }

.m-create   { left: 13px;  top: 20px;  width: 84px; }
.m-stdlights{ left: 107px; top: 20px;  width: 98px; }
.m-lights   { left: 215px; top: 20px;  width: 81px; }
.m-shapes   { left: 224px; top: 98px;  width: 72px; }
.m-compound { left: 122px; top: 124px; width: 69px; }
.m-photo    { left: 124px; top: 181px; width: 61px; }
.m-helpers  { left: 115px; top: 225px; width: 82px; }
.m-particle { left: 13px;  top: 246px; width: 66px; }
.m-systems  { left: 222px; top: 291px; width: 74px; }

.m-file     { left: 14px;  top: 20px;  width: 108px; }
.m-ref      { left: 132px; top: 20px;  width: 118px; }
.m-send     { left: 140px; top: 105px; width: 90px; }
.m-export   { left: 143px; top: 168px; width: 83px; }
.m-import   { left: 150px; top: 245px; width: 64px; }
.m-new      { left: 30px;  top: 290px; width: 77px; }

.m-customize{ left: 13px;  top: 20px;  width: 124px; }
.m-edit     { left: 147px; top: 19px;  width: 129px; }
.m-graph    { left: 153px; top: 198px; width: 107px; }
.m-showed   { left: 16px;  top: 238px; width: 116px; }
.m-script   { left: 288px; top: 17px;  width: 147px; }
.m-assembly { left: 271px; top: 262px; width: 61px; }
.m-showex   { left: 343px; top: 257px; width: 92px; }
.m-render   { left: 446px; top: 17px;  width: 161px; }

.m-ph1 { left: 15px;  top: 16px; width: 69px; }
.m-ph2 { left: 96px;  top: 16px; width: 64px; }
.m-ph3 { left: 172px; top: 16px; width: 60px; }

.head {
  height: 15px;
  background: #fff;
  display: flex;
  align-items: center;
  justify-content: space-between;
  padding-left: 4px;
  color: #a0a0a0;
  font-size: 5.800px;
  white-space: nowrap;
  box-shadow: 0 1px 0 #2c2c2c;
}
.close {
  width: 9px;
  height: 9px;
  background: #e2e2e2;
  align-self: flex-end;
  margin-bottom: 2px;
  flex: none;
}

.body {
  margin-left: 1px;
  background: #4f4f4f;
  padding: 1px 0 .5px;
}

.row {
  display: grid;
  grid-template-columns: 11px 1fr auto 12px;
  align-items: center;
  height: 11.3px;
  line-height: 11.3px;
  font-size: 5.500px;
  color: #e8e8e8;
  -webkit-text-stroke: .1px currentColor;
  white-space: nowrap;
}
.narrow .row { grid-template-columns: 9px 1fr auto 12px; }

.dis { color: #858585; }

.gut { grid-column: 1; display: flex; align-items: center; justify-content: center; font-style: normal; }
.lab { grid-column: 2; padding-top: 1.500px; }
.key { grid-column: 3; padding-top: 1.500px; }
.arr {
  grid-column: 4;
  justify-self: center;
  width: 0;
  height: 0;
  border-left: 2.5px solid #e4e4e4;
  border-top: 2px solid transparent;
  border-bottom: 2px solid transparent;
}

.ic { width: 8.500px; height: 8.500px; flex: none; }

.glyph { color: #909090; font-size: 5.4px; }
.snap { color: #d4d4d4; font-size: 6.5px; position: relative; }
.snap::after {
  content: "?";
  position: absolute;
  top: -1px;
  right: -1px;
  font-size: 5px;
  line-height: 5px;
  color: #e0a81c;
}

.sep {
  height: 1.9px;
  background: #484848;
}

u { text-decoration-thickness: .4px; text-underline-offset: .5px; text-decoration-color: rgba(232, 232, 232, .5); }
```
